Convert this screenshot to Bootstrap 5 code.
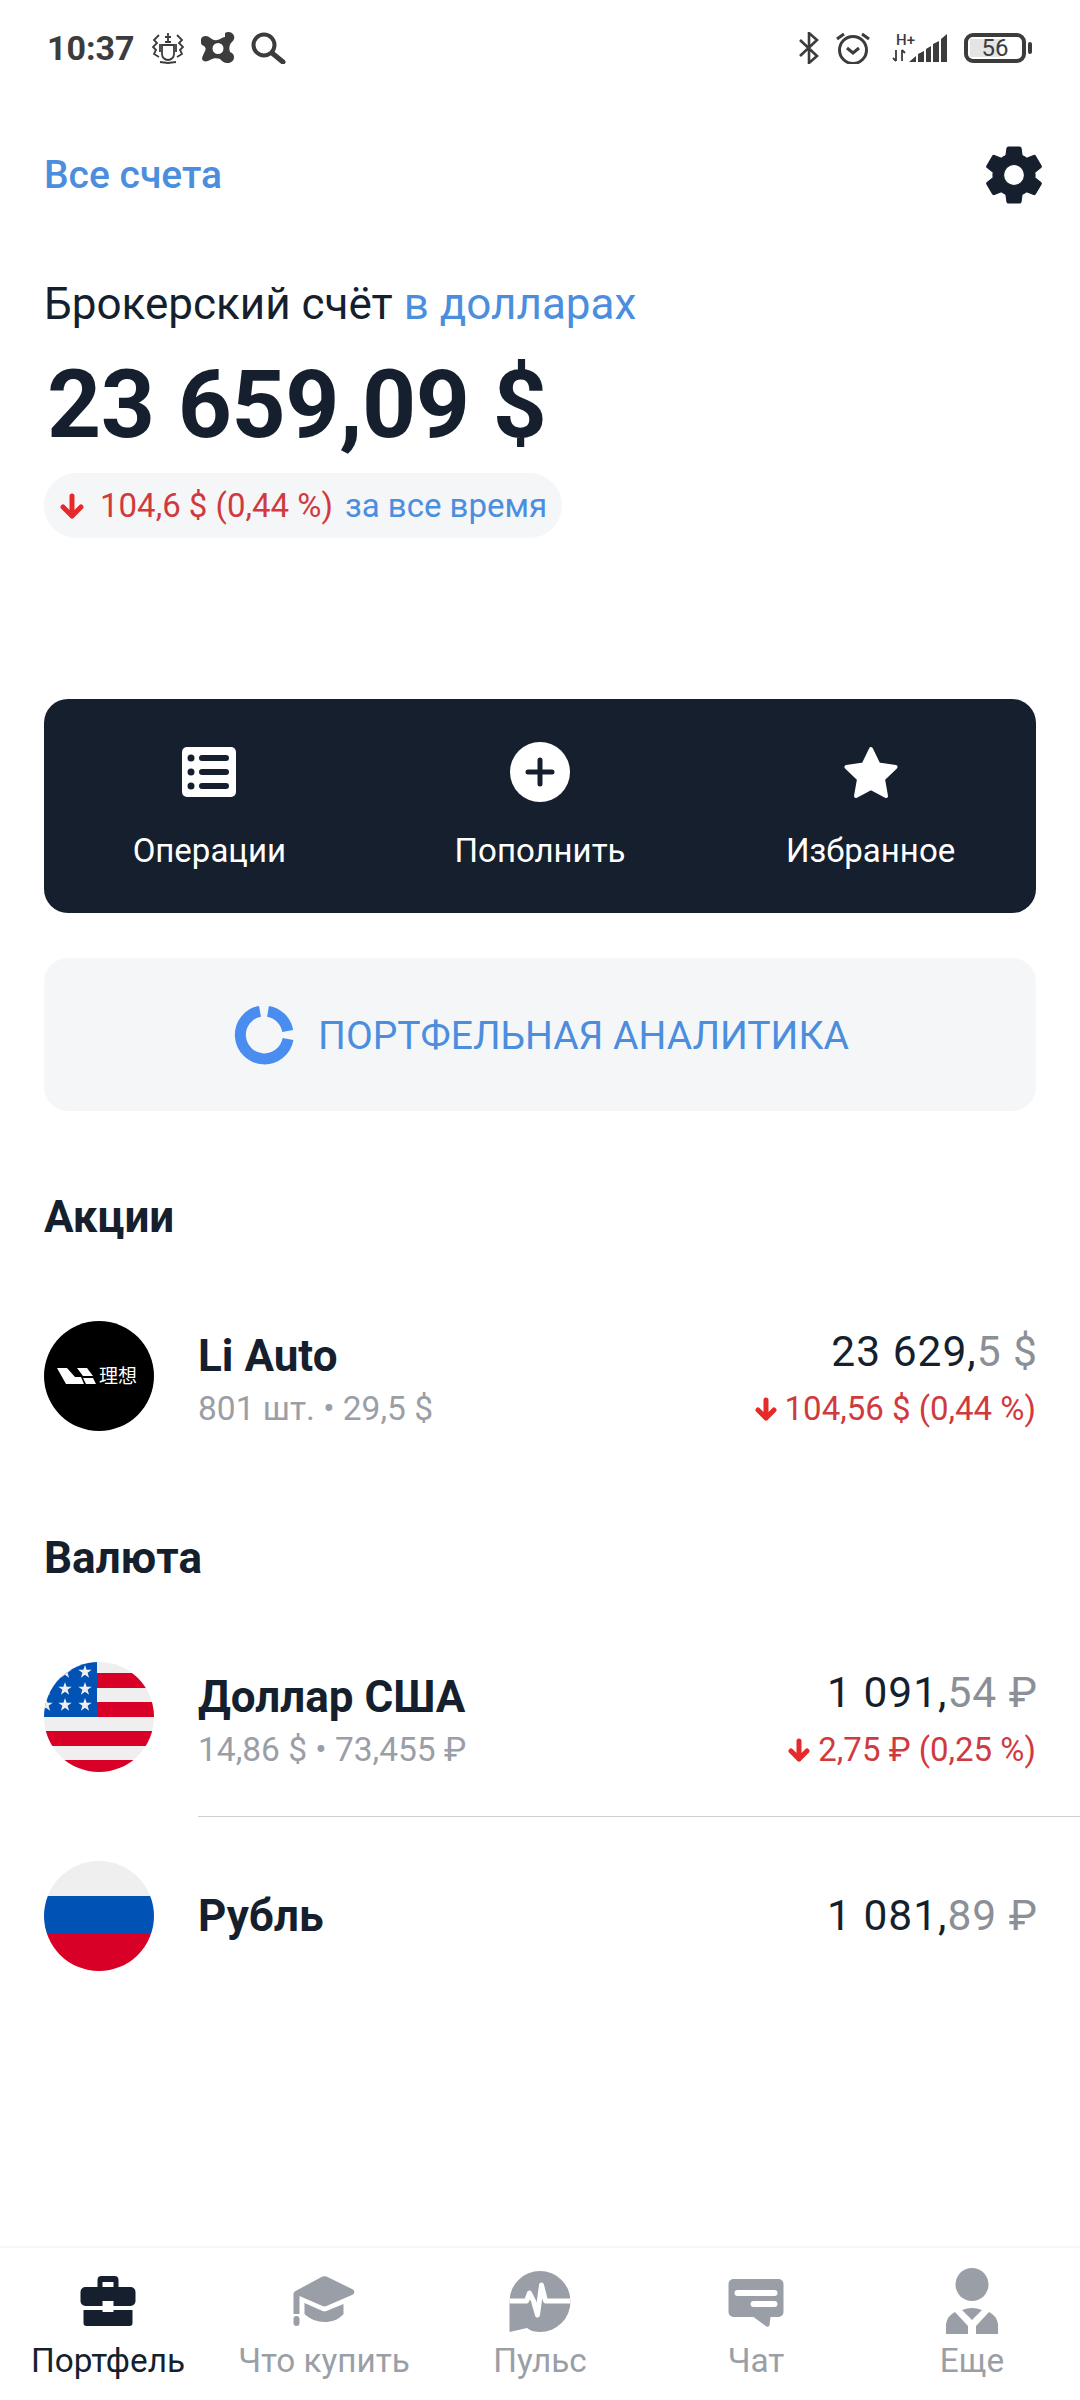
<!DOCTYPE html>
<html lang="ru">
<head>
<meta charset="UTF-8">
<meta name="viewport" content="width=device-width, initial-scale=1.0">
<title>Портфель</title>
<link href="https://cdn.jsdelivr.net/npm/bootstrap@5.3.0/dist/css/bootstrap.min.css" rel="stylesheet">
<style>
    body { font-family: Roboto, "Liberation Sans", sans-serif; color: #151f2e; background: #fff; }
    .screen { width: 1080px; height: 2400px; }
    .status-bar { height: 96px; padding: 0 48px 0 47px; color: #3c3c3c; }
    .status-time { font-size: 34px; font-weight: 700; line-height: 1; }
    .top-row { height: 70px; margin-top: 44px; padding: 0 31px 0 44px; }
    .all-link { font-size: 39px; font-weight: 500; color: #4c8ede; }
    .acc-title { font-size: 44px; line-height: 50px; margin: 69px 0 0 44px; }
    .blue-text { color: #4c8ede; }
    .big-sum { font-size: 94.500px; font-weight: 700; line-height: 112px; margin: 20px 0 0 47px; letter-spacing: -0.4px; }
    .change-pill { height: 65px; margin: 12px 0 0 44px; padding: 0 16px; background: #f5f6f8; border-radius: 33px; font-size: 33px; width: 518px; white-space: nowrap; }
    .red-text { color: #d03a3e; }
    .pill-note { margin-left: 12px; }
    .action-card { height: 214px; margin: 161px 44px 0; background: #151f2e; border-radius: 24px; color: #fff; }
    .action-item { font-size: 33px; line-height: 40px; gap: 29px; }
    .action-icon { height: 60px; }
    .analytics-btn { height: 153px; margin: 45px 44px 0; padding-left: 3px; background: #f5f6f8; border-radius: 24px; color: #4c8ede; font-size: 39px; gap: 24px; }
    .analytics-label { padding-top: 4px; }
    .sec-title { font-size: 44px; font-weight: 700; line-height: 50px; margin-left: 44px; }
    .sec-first { margin-top: 81px; }
    .sec-next { margin-top: 102px; }
    .asset-row { height: 110px; margin-top: 79px; padding: 0 44px; gap: 44px; }
    .asset-row.after-line { margin-top: 44px; }
    .asset-text { padding-top: 8px; }
    .asset-right { padding-top: 3px; }
    .asset-name { font-size: 44px; font-weight: 700; line-height: 50px; }
    .asset-sub { font-size: 33.500px; line-height: 40px; color: #9a9ea6; margin-top: 8px; }
    .asset-val { font-size: 42.500px; line-height: 50px; letter-spacing: 1px; margin-right: -2px; }
    .asset-val span { color: #8b8f96; }
    .asset-diff { font-size: 33px; line-height: 40px; color: #d03a3e; margin-top: 12px; gap: 8px; }
    .asset-logo { width: 110px; height: 110px; flex: none; }
    .row-line { height: 1px; background: #cfcfcf; margin: 44px 0 0 198px; }
    .tab-bar { height: 154px; border-top: 2px solid #f6f6f6; }
    .tab-item { width: 216px; font-size: 33.300px; line-height: 40px; color: #9a9ea6; }
    .tab-item.active-tab { color: #151f2e; }
    .tab-icon { height: 68px; margin: 18px 0 7px; }
    .cjk-text { font-family: "Noto Sans CJK SC", sans-serif; }
</style>
</head>
<body>
<div class="screen d-flex flex-column">

    <!-- статус бар -->
    <div class="status-bar d-flex align-items-center justify-content-between">
        <div class="d-flex align-items-center gap-3">
            <span class="status-time">10:37</span>
            <svg width="34" height="32" viewBox="0 0 34 32" fill="none" stroke="#3c3c3c" stroke-width="1.800">
                <path d="M11 13h12v9a6 6 0 0 1-12 0zM17 1v9M14 5h6M14 10h6"/>
                <path d="M8 3L3 8l3 3-4 4 3 3-2 4 5 3M26 3l5 5-3 3 4 4-3 3 2 4-5 3M9 12v8M25 12v8M9 30l8 1 8-1"/>
            </svg>
            <svg width="34" height="32" viewBox="0 0 34 32"><path fill="#3c3c3c" fill-rule="evenodd" d="M24 1c3-2 8-1 9 3 1 3-1 5-3 7-2 3-2 6-1 9 2 1 4 2 4 5 0 4-3 6-7 6-3 0-5-2-7-4-3-1-7-1-10 1-3 2-7 2-8-1 0-3 2-5 3-8 1-2 1-3-1-5-3-1-4-4-3-7 1-3 5-4 8-2 3 2 5 4 8 3 3 0 5-3 8-3zM17 11a5.500 5.500 0 1 0 0 11 5.500 5.500 0 0 0 0-11z"/></svg>
            <svg width="35" height="32" viewBox="0 0 35 32" fill="none" stroke="#3c3c3c"><circle cx="13" cy="13" r="10.500" stroke-width="4"/><path d="M21 21l11 9" stroke-width="5" stroke-linecap="round"/></svg>
        </div>
        <div class="d-flex align-items-center gap-3">
            <svg width="20" height="32" viewBox="0 0 20 32" fill="none" stroke="#3c3c3c" stroke-width="2.600"><path d="M1 8l17 16-8 7V1l8 7L1 24"/></svg>
            <svg width="36" height="32" viewBox="0 0 36 32" fill="none" stroke="#3c3c3c" stroke-width="3"><circle cx="18" cy="18" r="13.500"/><path d="M12 16l6 5 6-5M2 7l7-5M34 7l-7-5"/></svg>
            <svg width="61" height="32" viewBox="0 0 61 32" fill="#3c3c3c"><text x="9" y="13" font-family="Roboto" font-size="15" font-weight="500">H+</text><path d="M9 18v11M6 26l3 3M15 29V18M15 18l3 3" fill="none" stroke="#3c3c3c" stroke-width="1.800"/><path d="M22 30l7-6v6zM31 22l6-3v11h-6zM39 17l5-3v16h-5zM46 12l6-3v21h-6zM54 7l6-5v28h-6z"/></svg>
            <svg width="68" height="30" viewBox="0 0 68 30">
                <rect x="2" y="2" width="58" height="26" rx="7" fill="#fff" stroke="#3c3c3c" stroke-width="4"/>
                <rect x="6" y="6" width="30" height="18" fill="#e4e4e4"/>
                <rect x="64" y="9" width="4" height="12" rx="2" fill="#3c3c3c"/>
                <text x="31" y="23" text-anchor="middle" font-family="Roboto" font-size="24" fill="#3c3c3c">56</text>
            </svg>
        </div>
    </div>

    <!-- все счета -->
    <div class="top-row d-flex align-items-center justify-content-between">
        <a class="all-link text-decoration-none">Все счета</a>
        <svg width="70" height="70" viewBox="0 0 24 24"><path fill="#151f2e" stroke="#151f2e" stroke-width=".4" d="M19.14 12.94c.04-.3.06-.61.06-.94 0-.32-.02-.64-.07-.94l2.03-1.58a.49.49 0 0 0 .12-.61l-1.92-3.32a.488.488 0 0 0-.59-.22l-2.39.96c-.5-.38-1.03-.7-1.62-.94l-.36-2.54a.484.484 0 0 0-.48-.41h-3.84c-.24 0-.43.17-.47.41l-.36 2.54c-.59.24-1.13.57-1.62.94l-2.39-.96c-.22-.08-.47 0-.59.22L2.74 8.87c-.12.21-.08.47.12.61l2.03 1.58c-.05.3-.09.63-.09.94s.02.64.07.94l-2.03 1.58a.49.49 0 0 0-.12.61l1.92 3.32c.12.22.37.29.59.22l2.39-.96c.5.38 1.03.7 1.62.94l.36 2.54c.05.24.24.41.48.41h3.84c.24 0 .44-.17.47-.41l.36-2.54c.59-.24 1.13-.56 1.62-.94l2.39.96c.22.08.47 0 .59-.22l1.92-3.32c.12-.22.07-.47-.12-.61l-2.01-1.58zM12 15.6c-1.98 0-3.6-1.62-3.6-3.6s1.62-3.6 3.6-3.6 3.6 1.62 3.6 3.6-1.62 3.6-3.6 3.6z"/></svg>
    </div>

    <div class="acc-title">Брокерский счёт <span class="blue-text">в долларах</span></div>
    <div class="big-sum">23 659,09 $</div>
    <div class="change-pill d-flex align-items-center">
        <svg class="me-3 flex-shrink-0" width="24" height="26" viewBox="0 0 24 26" fill="none" stroke="#e62a2a" stroke-width="5" stroke-linecap="round" stroke-linejoin="round"><path d="M12 3v20M3 14l9 9 9-9"/></svg>
        <span class="red-text">104,6 $ (0,44 %)</span>
        <span class="blue-text pill-note">за все время</span>
    </div>

    <!-- действия -->
    <div class="action-card row g-0 align-items-center">
        <div class="action-item col-4 d-flex flex-column align-items-center">
            <svg class="action-icon" width="54" height="60" viewBox="0 0 54 60"><rect y="5" width="54" height="50" rx="5" fill="#fff"/><g fill="#151f2e"><circle cx="9" cy="16" r="3.500"/><circle cx="9" cy="30" r="3.500"/><circle cx="9" cy="44" r="3.500"/><rect x="17" y="13" width="30" height="6" rx="3"/><rect x="17" y="27" width="30" height="6" rx="3"/><rect x="17" y="41" width="30" height="6" rx="3"/></g></svg>
            <span>Операции</span>
        </div>
        <div class="action-item col-4 d-flex flex-column align-items-center">
            <svg class="action-icon" width="60" height="60" viewBox="0 0 60 60"><circle cx="30" cy="30" r="30" fill="#fff"/><path d="M30 18v24M18 30h24" stroke="#151f2e" stroke-width="5" stroke-linecap="round"/></svg>
            <span>Пополнить</span>
        </div>
        <div class="action-item col-4 d-flex flex-column align-items-center">
            <svg class="action-icon" width="56" height="60" viewBox="0 0 56 60"><path fill="#fff" stroke="#fff" stroke-width="4" stroke-linejoin="round" d="M28 7l7.500 15.500 17 2.500-12.500 12 3 17-15-8-15 8 3-17-12.500-12 17-2.500z"/></svg>
            <span>Избранное</span>
        </div>
    </div>

    <div class="analytics-btn d-flex align-items-center justify-content-center">
        <svg width="60" height="60" viewBox="0 0 60 60" fill="none" stroke="#4a8df0" stroke-width="11"><path d="M26 6.300A24 24 0 1 0 54 34"/><path d="M34 6.300A24 24 0 0 1 53.700 26"/></svg>
        <span class="analytics-label">ПОРТФЕЛЬНАЯ АНАЛИТИКА</span>
    </div>

    <!-- акции -->
    <div class="sec-title sec-first">Акции</div>
    <div class="asset-row d-flex align-items-center">
        <svg class="asset-logo" viewBox="0 0 110 110">
            <circle cx="55" cy="55" r="55" fill="#000"/>
            <path fill="#fff" d="M13 47h10l8 9h6l3 7H22zM33 47h10l6 8H39zM39 57h10l3 6H42z"/>
            <text class="cjk-text" x="55" y="62" font-size="19" fill="#fff">理想</text>
        </svg>
        <div class="asset-text flex-grow-1">
            <div class="asset-name">Li Auto</div>
            <div class="asset-sub">801 шт. • 29,5 $</div>
        </div>
        <div class="asset-right text-end">
            <div class="asset-val">23 629,<span>5 $</span></div>
            <div class="asset-diff d-flex align-items-center justify-content-end">
                <svg width="22" height="24" viewBox="0 0 22 24" fill="none" stroke="#e62a2a" stroke-width="5" stroke-linecap="round" stroke-linejoin="round"><path d="M11 3v18M3 13l8 8 8-8"/></svg>
                <span>104,56 $ (0,44 %)</span>
            </div>
        </div>
    </div>

    <!-- валюта -->
    <div class="sec-title sec-next">Валюта</div>
    <div class="asset-row d-flex align-items-center">
        <svg class="asset-logo" viewBox="0 0 110 110">
            <defs>
                <clipPath id="flagClip"><circle cx="55" cy="55" r="55"/></clipPath>
                <polygon id="flagStar" fill="#efefef" points="0,-7 1.600,-2.200 6.700,-2.200 2.600,.8 4.100,5.700 0,2.700 -4.100,5.700 -2.600,.8 -6.700,-2.200 -1.600,-2.200"/>
            </defs>
            <g clip-path="url(#flagClip)">
                <rect width="110" height="110" fill="#efefef"/>
                <rect x="53" y="11" width="57" height="15" fill="#d80027"/>
                <rect x="53" y="40" width="57" height="15" fill="#d80027"/>
                <rect y="69" width="110" height="15" fill="#d80027"/>
                <rect y="98" width="110" height="12" fill="#d80027"/>
                <rect width="53" height="55" fill="#0052b4"/>
                <use href="#flagStar" x="41" y="10"/><use href="#flagStar" x="21" y="10"/>
                <use href="#flagStar" x="41" y="27"/><use href="#flagStar" x="21" y="27"/><use href="#flagStar" x="2" y="27"/>
                <use href="#flagStar" x="41" y="43"/><use href="#flagStar" x="21" y="43"/><use href="#flagStar" x="2" y="43"/>
            </g>
        </svg>
        <div class="asset-text flex-grow-1">
            <div class="asset-name">Доллар США</div>
            <div class="asset-sub">14,86 $ • 73,455 ₽</div>
        </div>
        <div class="asset-right text-end">
            <div class="asset-val">1 091,<span>54 ₽</span></div>
            <div class="asset-diff d-flex align-items-center justify-content-end">
                <svg width="22" height="24" viewBox="0 0 22 24" fill="none" stroke="#e62a2a" stroke-width="5" stroke-linecap="round" stroke-linejoin="round"><path d="M11 3v18M3 13l8 8 8-8"/></svg>
                <span>2,75 ₽ (0,25 %)</span>
            </div>
        </div>
    </div>
    <div class="row-line"></div>
    <div class="asset-row after-line d-flex align-items-center">
        <svg class="asset-logo" viewBox="0 0 110 110">
            <defs><clipPath id="ruClip"><circle cx="55" cy="55" r="55"/></clipPath></defs>
            <g clip-path="url(#ruClip)">
                <rect width="110" height="35" fill="#efefef"/>
                <rect y="35" width="110" height="38" fill="#0052b4"/>
                <rect y="73" width="110" height="37" fill="#d80027"/>
            </g>
        </svg>
        <div class="flex-grow-1">
            <div class="asset-name">Рубль</div>
        </div>
        <div class="asset-val">1 081,<span>89 ₽</span></div>
    </div>

    <!-- нижнее меню -->
    <div class="tab-bar d-flex mt-auto">
        <div class="tab-item active-tab d-flex flex-column align-items-center">
            <svg class="tab-icon" width="100" height="68" viewBox="0 0 100 68"><g transform="translate(22.500 10)" fill="#151f2e">
                <path fill-rule="evenodd" d="M21 0h13a4 4 0 0 1 4 4v7h12a5 5 0 0 1 5 5v9a5 5 0 0 1-5 5H33v-5H22v5H5a5 5 0 0 1-5-5v-9a5 5 0 0 1 5-5h12V4a4 4 0 0 1 4-4zm1 6v5h11V6z"/>
                <path d="M3 34h19v2h11v-2h19v13a3 3 0 0 1-3 3H6a3 3 0 0 1-3-3z"/>
            </g></svg>
            <span>Портфель</span>
        </div>
        <div class="tab-item d-flex flex-column align-items-center">
            <svg class="tab-icon" width="100" height="68" viewBox="0 0 100 68"><g transform="translate(19.500 10)" fill="#9a9ea6">
                <path d="M29 .6a5 5 0 0 1 4 0l26 12.600a3 3 0 0 1 0 5.500L33 30a5 5 0 0 1-4 0L6 20v18H0V19a4 4 0 0 1 2-4z"/>
                <rect y="40" width="6" height="10" rx="3"/>
                <path d="M11 27l18 8a5 5 0 0 0 4 0l17-7v10c-5 6-12 8-19 8s-15-3-20-8z"/>
            </g></svg>
            <span>Что купить</span>
        </div>
        <div class="tab-item d-flex flex-column align-items-center">
            <svg class="tab-icon" width="100" height="68" viewBox="0 0 100 68"><g transform="translate(19.500 5)">
                <path fill="#9a9ea6" d="M30.500 0a30.500 30.500 0 0 1 0 61c-5 0-9-1-13-4L0 61V30.500A30.500 30.500 0 0 1 30.500 0z"/>
                <path fill="none" stroke="#fff" stroke-width="5" stroke-linejoin="round" d="M0 30H17L20 22L24 30L28 44L32 14L36 30H61"/>
            </g></svg>
            <span>Пульс</span>
        </div>
        <div class="tab-item d-flex flex-column align-items-center">
            <svg class="tab-icon" width="100" height="68" viewBox="0 0 100 68"><g transform="translate(22.500 13)">
                <path fill="#9a9ea6" d="M5 0h45a5 5 0 0 1 5 5v28a5 5 0 0 1-5 5h-8l-1 8a2 2 0 0 1-3 1.500L25 38H5a5 5 0 0 1-5-5V5a5 5 0 0 1 5-5z"/>
                <rect x="6" y="11" width="43" height="6" rx="3" fill="#fff"/>
                <rect x="22" y="22" width="27" height="6" rx="3" fill="#fff"/>
            </g></svg>
            <span>Чат</span>
        </div>
        <div class="tab-item d-flex flex-column align-items-center">
            <svg class="tab-icon" width="100" height="68" viewBox="0 0 100 68"><g transform="translate(24 2)" fill="#9a9ea6">
                <circle cx="26" cy="16.500" r="16.500"/>
                <path d="M16 42q10-4 20 0L26 52z"/>
                <path d="M9 44L22 58v8H0V56q1-8 9-12z"/>
                <path d="M43 44L30 58v8h22V56q-1-8-9-12z"/>
            </g></svg>
            <span>Еще</span>
        </div>
    </div>
</div>
<script src="https://cdn.jsdelivr.net/npm/bootstrap@5.3.0/dist/js/bootstrap.bundle.min.js"></script>
</body>
</html>
